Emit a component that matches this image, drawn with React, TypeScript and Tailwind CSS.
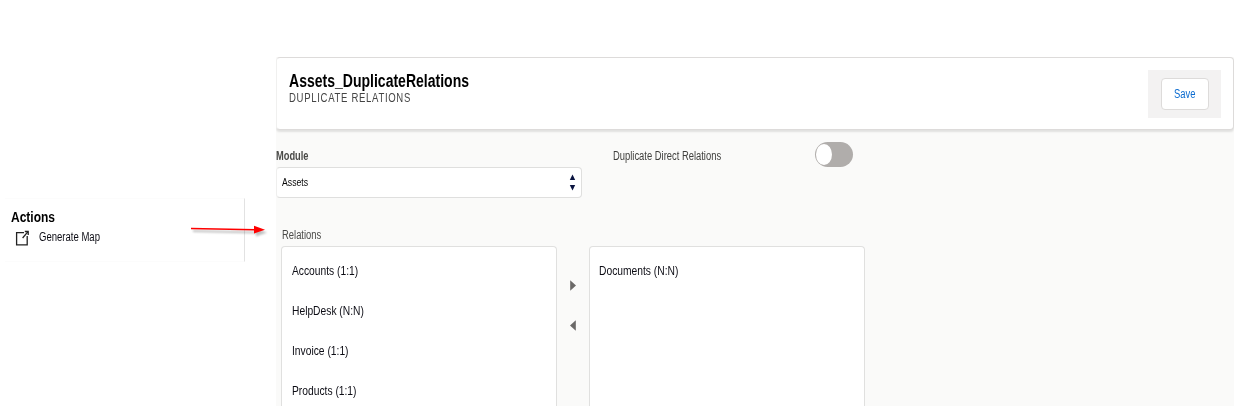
import type { ReactNode } from 'react';

function Narrow({ children, className = '' }: { children: ReactNode; className?: string }) {
  return (
    <span className={`inline-block origin-left whitespace-nowrap ${className}`}>{children}</span>
  );
}

const available = ['Accounts (1:1)', 'HelpDesk (N:N)', 'Invoice (1:1)', 'Products (1:1)'];
const selected = ['Documents (N:N)'];

function RelationList({ items, className }: { items: string[]; className: string }) {
  return (
    <ul className={`h-[160px] rounded-t border-x border-t border-[#e0e0df] bg-white pt-1 ${className}`}>
      {items.map((item) => (
        <li key={item} className="flex h-10 items-center text-[13px] text-[#0c0c14]">
          <Narrow className="scale-x-[0.79]">{item}</Narrow>
        </li>
      ))}
    </ul>
  );
}

function ActionsPanel() {
  return (
    <aside className="mt-[198px] h-16 w-[240px] border-y border-r border-y-[#fcfcfc] border-r-[#e2e2e2] pt-[9px] pl-[6px]">
      <h2 className="h-[18px] text-[14px] leading-[18px] font-bold text-black">
        <Narrow className="scale-x-[0.857]">Actions</Narrow>
      </h2>
      <div className="mt-px flex h-5 items-center pl-1 text-[12px] text-[#0c0c14]">
        <svg width="15" height="16" viewBox="0 0 15 16" fill="none" stroke="#222" strokeWidth="1.3" className="mt-px mr-[9px]">
          <path d="M9 2.7H1.6V14.8H12.2V6" />
          <path d="M7.6 8L12.8 1.8" />
          <path d="M9.8 1.5H13.2V5" />
        </svg>
        <Narrow className="scale-x-[0.795]">Generate Map</Narrow>
      </div>
    </aside>
  );
}

export default function App() {
  return (
    <div className="relative flex h-[410px] w-[1236px] overflow-hidden bg-white font-['Liberation_Sans',Arial,sans-serif]">
      <div className="w-[276px] shrink-0 pl-[5px]">
        <ActionsPanel />
      </div>
      <svg width="84" height="18" viewBox="0 0 84 18" className="absolute top-[222px] left-[188px]">
        <g opacity="0.25" transform="translate(2 2.5)" className="blur-[1px]">
          <path d="M3 6.5L67 8" stroke="#000" strokeWidth="2" />
          <path d="M66 4L77 8L66 12Z" fill="#000" />
        </g>
        <path d="M3 6.5L67 7.7" stroke="#f00" strokeWidth="1.6" />
        <path d="M66 3.8L77 7.8L66 11.6Z" fill="#f00" />
      </svg>
      <main className="mt-[57px] h-[349px] w-[958px] overflow-hidden bg-[#fafaf9]">
        <header className="flex h-[73px] justify-between rounded border border-[#dddbda] border-l-[#f0f0ef] bg-white pt-3 pr-3 pl-3 shadow-[0_2px_2px_rgba(0,0,0,0.10)]">
          <div>
            <h1 className="h-[21px] text-[18px] leading-[23px] font-bold text-black">
              <Narrow className="scale-x-[0.779]">Assets_DuplicateRelations</Narrow>
            </h1>
            <p className="text-[12px] leading-[14px] tracking-[0.87px] text-[#444]">
              <Narrow className="scale-x-[0.795]">DUPLICATE RELATIONS</Narrow>
            </p>
          </div>
          <div className="flex h-12 w-[73px] items-center justify-center bg-[#f3f2f2]">
            <button className="flex h-8 w-12 items-center rounded border border-[#dddbda] bg-white pl-3 text-[12px] text-[#0a6bd0]">
              <Narrow className="scale-x-[0.785]">Save</Narrow>
            </button>
          </div>
        </header>
        <section className="flex">
          <div className="w-[306px] pt-[17px]">
            <div className="h-[20px] text-[12px] leading-[18px] font-bold text-[#4a4a48]">
              <Narrow className="scale-x-[0.775]">Module</Narrow>
            </div>
            <div className="flex h-[31px] items-center justify-between rounded border border-[#dfdfde] border-l-[#efefee] bg-white pr-[5px] pl-[5px] text-[11px] text-[#080808]">
              <Narrow className="scale-x-[0.79]">Assets</Narrow>
              <svg width="7" height="17" viewBox="0 0 7 17" fill="#0a1440">
                <path d="M3.5 0.5L6.2 6H0.8Z" />
                <path d="M0.8 11H6.2L3.5 16.5Z" />
              </svg>
            </div>
          </div>
          <div className="flex items-start pt-3 pl-[31px]">
            <div className="w-[202px] pt-[5px] text-[12px] leading-[18px] text-[#3e3e3c]">
              <Narrow className="scale-x-[0.783]">Duplicate Direct Relations</Narrow>
            </div>
            <div className="flex h-[25px] w-[38px] items-center rounded-full bg-[#b0adab] pl-px">
              <span className="h-[21px] w-4 rounded-[50%] bg-white" />
            </div>
          </div>
        </section>
        <section className="pt-[28px] pl-[5px]">
          <div className="h-[20px] pl-[0.5px] text-[12px] leading-[18px] text-[#4a4a48]">
            <Narrow className="scale-x-[0.785]">Relations</Narrow>
          </div>
          <div className="flex">
            <RelationList items={available} className="w-[276px] pl-[9.5px]" />
            <div className="flex w-8 flex-col items-center gap-[29px] pt-[34px]">
              <svg width="6" height="11" viewBox="0 0 6 11" fill="#6b6968">
                <path d="M0.2 0.2L6 5.5L0.2 10.8Z" />
              </svg>
              <svg width="6" height="11" viewBox="0 0 6 11" fill="#6b6968">
                <path d="M5.8 0.2L0 5.5L5.8 10.8Z" />
              </svg>
            </div>
            <RelationList items={selected} className="w-[276px] pl-[9px]" />
          </div>
        </section>
      </main>
    </div>
  );
}
